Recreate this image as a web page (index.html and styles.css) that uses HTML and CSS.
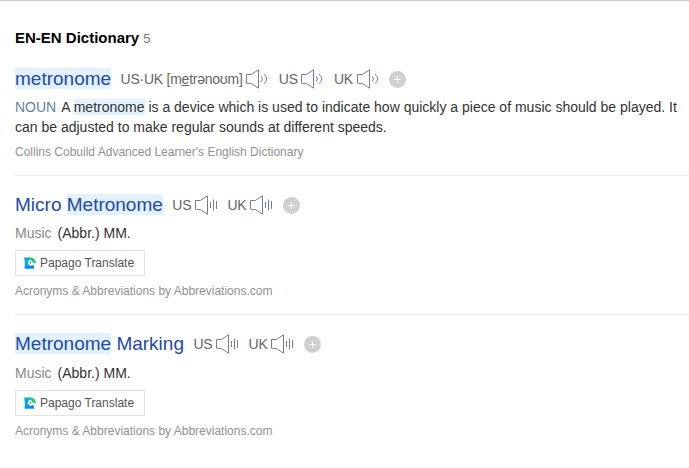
FILE: index.html
```html
<!DOCTYPE html>
<html lang="en">
<head>
<meta charset="utf-8">
<title>EN-EN Dictionary</title>
<link rel="stylesheet" href="styles.css">
</head>
<body>
<svg class="defs" aria-hidden="true">
  <symbol id="speaker" viewBox="0 0 24 20">
    <path d="M.5 5.5H5.3L12.5.8V19.2L5.3 14.5H3.2L.5 14.2Z"/>
    <path d="M15.2 7.3q2.6 2.7 0 5.4M18 5.1q5.4 4.9 0 9.8"/>
  </symbol>
  <symbol id="speaker-tts" viewBox="0 0 24 20">
    <path d="M.5 5.5H5.3L12.5.8V19.2L5.3 14.5H3.2L.5 14.2Z"/>
    <path d="M15.5 7v6M18.5 4.5v11M21.5 6v8"/>
  </symbol>
  <symbol id="papago" viewBox="0 0 12 12">
    <path fill="#08a9e8" d="M0 .5H5.5Q11.5.5 11.8 6.3L9.3 8.4 10.2 11.5H.8V6.2Q.8 3.4 0 .5Z"/>
    <path fill="#20cd67" d="M4.2.5Q11.4.3 11.8 6.5H8.6Q8.4 2.9 4.2 2.4Z"/>
    <path fill="#fff" d="M6.1 3.1A2.7 2.7 0 1 0 7.8 8.2L11.8 7.6V6.2L8.6 5.6Q8.1 3.1 6.1 3.1Z"/>
    <circle cx="6.5" cy="5.7" r=".8" fill="#22538d"/>
    <path fill="#1685e8" d="M5.4 9.2 9.6 8.7 10.2 11.5H.8V9.6Z"/>
  </symbol>
</svg>
<main class="dictionary">
  <h1 class="title">EN-EN Dictionary <span class="count">5</span></h1>

  <article class="entry">
    <header class="head">
      <h2 class="word"><mark>metronome</mark></h2>
      <span class="pron">US·UK [m<u>e</u>trənoʊm]<svg class="speaker"><use href="#speaker"/></svg></span>
      <span class="pron">US<svg class="speaker"><use href="#speaker"/></svg></span>
      <span class="pron">UK<svg class="speaker"><use href="#speaker"/></svg></span>
      <span class="add"></span>
    </header>
    <p class="meaning"><span class="pos">NOUN</span>A <mark>metronome</mark> is a device which is used to indicate how quickly a piece of music should be played. It can be adjusted to make regular sounds at different speeds.</p>
    <p class="source">Collins Cobuild Advanced Learner's English Dictionary</p>
  </article>

  <article class="entry">
    <header class="head">
      <h2 class="word">Micro <mark>Metronome</mark></h2>
      <span class="pron">US<svg class="speaker"><use href="#speaker-tts"/></svg></span>
      <span class="pron">UK<svg class="speaker"><use href="#speaker-tts"/></svg></span>
      <span class="add"></span>
    </header>
    <p class="meaning"><span class="field">Music</span>(Abbr.) MM.</p>
    <a class="translate"><svg class="papago"><use href="#papago"/></svg>Papago Translate</a>
    <p class="source">Acronyms &amp; Abbreviations by Abbreviations.com</p>
  </article>

  <article class="entry">
    <header class="head">
      <h2 class="word"><mark>Metronome</mark> Marking</h2>
      <span class="pron">US<svg class="speaker"><use href="#speaker-tts"/></svg></span>
      <span class="pron">UK<svg class="speaker"><use href="#speaker-tts"/></svg></span>
      <span class="add"></span>
    </header>
    <p class="meaning"><span class="field">Music</span>(Abbr.) MM.</p>
    <a class="translate"><svg class="papago"><use href="#papago"/></svg>Papago Translate</a>
    <p class="source">Acronyms &amp; Abbreviations by Abbreviations.com</p>
  </article>
</main>
</body>
</html>
```
FILE: styles.css
```css
* { box-sizing: border-box; margin: 0; padding: 0; }
body {
  background: #fff;
  color: #333;
  font-family: "Liberation Sans", Arial, sans-serif;
  font-size: 14px;
  overflow: hidden;
}
.defs { position: absolute; width: 0; height: 0; }
.dictionary {
  height: 468px;
  padding: 27px 0 0 15px;
  border-top: 1px solid #c8c8c8;
}
.title { height: 20px; font-size: 15px; line-height: 20px; color: #000; }
.count { font-size: 13px; font-weight: 400; color: #777; }
.entry { height: 139px; padding-top: 18px; border-top: 1px solid #ececec; }
.title + .entry { height: 127px; padding-top: 20px; border-top: 0; }
.entry:last-child { height: 140px; }
.head { display: flex; align-items: center; height: 22px; }
.word { font-size: 19px; font-weight: 400; line-height: 22px; color: #2349ad; white-space: nowrap; }
mark { background: #e2f2fd; color: inherit; }
.pron { display: flex; align-items: center; margin-left: 8.5px; font-size: 14px; letter-spacing: -.25px; line-height: 20px; color: #666; white-space: pre; }
.word + .pron { margin-left: 9.5px; }
.speaker { width: 24px; height: 20px; margin-left: 3.7px; fill: none; stroke: #71809a; stroke-width: 1; }
.add {
  width: 17px;
  height: 17px;
  margin-left: 8.5px;
  border-radius: 50%;
  background:
    linear-gradient(#fff, #fff) center / 7px 1px no-repeat,
    linear-gradient(#fff, #fff) center / 1px 7px no-repeat,
    #d0d0d0;
}
.meaning { margin-top: 7px; line-height: 20px; white-space: normal; }
.entry:last-child .meaning { margin-top: 8px; }
.pos { margin-right: 5px; color: #6280a5; }
.field { margin-right: 6px; color: #888; }
.source { margin-top: 7px; font-size: 12px; line-height: 16px; color: #929292; }
.translate {
  display: flex;
  align-items: center;
  width: 130px;
  height: 26px;
  margin-top: 7px;
  padding-left: 8px;
  border: 1px solid #e2e2e2;
  font-size: 12px;
  color: #555;
}
.papago { width: 12px; height: 12px; margin-right: 4px; }
```
